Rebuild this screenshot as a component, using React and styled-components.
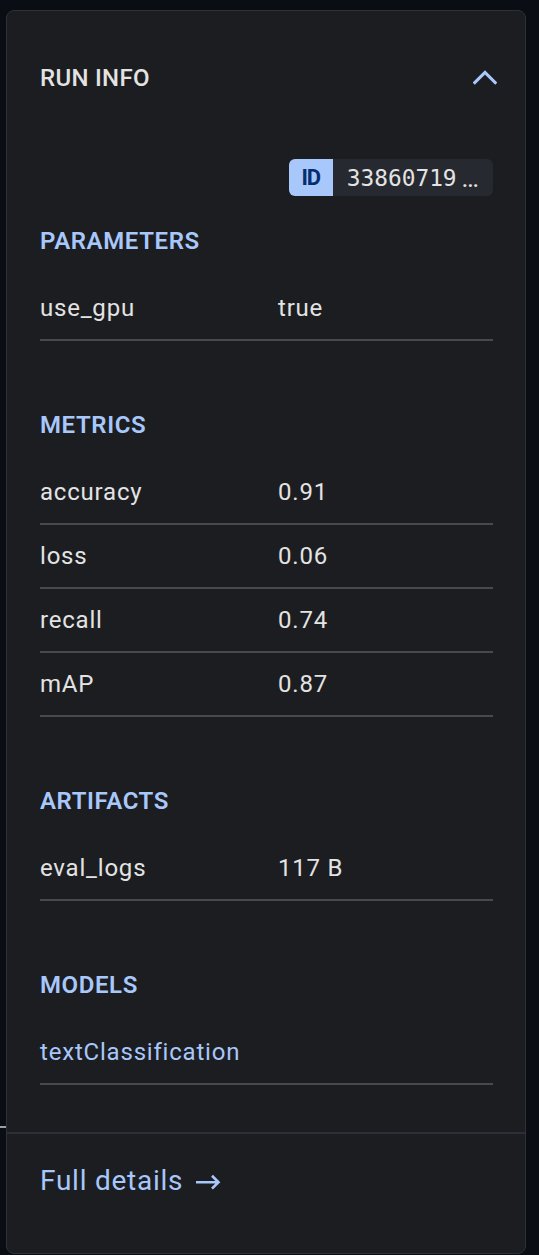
import React from "react"
import styled, { createGlobalStyle } from "styled-components"

const GlobalStyle = createGlobalStyle`
  html, body {
    margin: 0;
    padding: 0;
    background: #0a0d14;
    font-family: Roboto, "Noto Sans", "Liberation Sans", sans-serif;
    -webkit-font-smoothing: antialiased;
  }
`

const runInfo = {
  id: "33860719",
  parameters: [{ name: "use_gpu", value: "true" }],
  metrics: [
    { name: "accuracy", value: "0.91" },
    { name: "loss", value: "0.06" },
    { name: "recall", value: "0.74" },
    { name: "mAP", value: "0.87" },
  ],
  artifacts: [{ name: "eval_logs", value: "117 B" }],
  models: [{ name: "textClassification", link: true }],
}

export default function App() {
  return (
    <>
      <GlobalStyle />
      <Page>
        <Stray />
        <Card>
          <Body>
            <Header>
              <Title>Run info</Title>
              <Toggle aria-label="collapse">
                <svg width="24" height="16" viewBox="0 0 24 16" fill="none">
                  <polyline
                    points="1.8,13.6 12,3.4 22.2,13.6"
                    stroke="#a8c7fa"
                    strokeWidth="3.2"
                    strokeLinecap="square"
                    strokeLinejoin="miter"
                  />
                </svg>
              </Toggle>
            </Header>

            <IdRow>
              <IdBadge>
                <IdTag>ID</IdTag>
                <IdValue>
                  {runInfo.id}
                  <Dots>…</Dots>
                </IdValue>
              </IdBadge>
            </IdRow>

            <InfoSection title="Parameters" rows={runInfo.parameters} first />
            <InfoSection title="Metrics" rows={runInfo.metrics} />
            <InfoSection title="Artifacts" rows={runInfo.artifacts} />
            <InfoSection title="Models" rows={runInfo.models} />
          </Body>

          <Footer>
            <DetailsLink href="#">
              Full details
              <svg width="26" height="16" viewBox="0 0 26 16" fill="none">
                <path
                  d="M1 8.2H23.5M17 1.8L23.5 8.2L17 14.6"
                  stroke="#a8c7fa"
                  strokeWidth="2.6"
                  strokeLinecap="butt"
                  strokeLinejoin="miter"
                />
              </svg>
            </DetailsLink>
          </Footer>
        </Card>
      </Page>
    </>
  )
}

function InfoSection({ title, rows, first }) {
  return (
    <Section $first={first}>
      <SectionTitle>{title}</SectionTitle>
      {rows.map(row => (
        <Row key={row.name}>
          {row.link ? <ModelLink>{row.name}</ModelLink> : <Label>{row.name}</Label>}
          {row.value && <Value>{row.value}</Value>}
        </Row>
      ))}
    </Section>
  )
}

const Page = styled.div`
  position: relative;
  min-height: 1255px;
  padding: 10px 0 0 6px;
  box-sizing: border-box;
`

// bit of the canvas poking out from behind the card
const Stray = styled.div`
  position: absolute;
  left: 0;
  top: 1126px;
  width: 6px;
  height: 2px;
  background: #9a9ea6;
`

const Card = styled.div`
  position: relative;
  width: 520px;
  height: 1244px;
  box-sizing: border-box;
  background: #1c1d20;
  border: 1px solid #2d3138;
  border-radius: 8px;
  display: flex;
  flex-direction: column;
  overflow: hidden;
`

const Body = styled.div`
  padding: 51px 32px 47px 33px;
`

const Header = styled.div`
  display: flex;
  align-items: center;
  justify-content: space-between;
  height: 32px;
`

const Title = styled.h2`
  margin: 0;
  font-size: 24px;
  line-height: 32px;
  font-weight: 500;
  text-transform: uppercase;
  color: #e3e3e3;
  letter-spacing: 0.3px;
`

const Toggle = styled.button`
  display: flex;
  align-items: center;
  padding: 0;
  margin: -2px -4px 0 0;
  border: 0;
  background: none;
  cursor: pointer;
`

const IdRow = styled.div`
  display: flex;
  justify-content: flex-end;
  margin-top: 65px;
`

const IdBadge = styled.div`
  display: flex;
  height: 37px;
  border-radius: 6px;
  overflow: hidden;
  background: #26292f;
`

const IdTag = styled.span`
  display: flex;
  align-items: center;
  justify-content: center;
  width: 44px;
  background: #a8c7fa;
  color: #062e6f;
  font-size: 22px;
  font-weight: 700;
  letter-spacing: -1px;
`

const IdValue = styled.span`
  display: flex;
  align-items: center;
  padding: 0 14px;
  font-family: "DejaVu Sans Mono", "Liberation Mono", monospace;
  font-size: 22.8px;
  color: #e3e3e3;
`

const Dots = styled.span`
  margin-left: 5px;
  font-family: Roboto, sans-serif;
  font-size: 26px;
`

const Section = styled.section`
  margin-top: ${({ $first }) => ($first ? "29px" : "68px")};
`

const SectionTitle = styled.h3`
  margin: 0 0 20px;
  font-size: 24px;
  line-height: 32px;
  font-weight: 600;
  text-transform: uppercase;
  letter-spacing: 0.6px;
  color: #a8c7fa;
`

const Row = styled.div`
  display: grid;
  grid-template-columns: 238px 1fr;
  align-items: center;
  height: 62px;
  border-bottom: 2px solid #47494e;
`

const Label = styled.span`
  font-size: 24px;
  letter-spacing: 0.8px;
  color: #e3e3e3;
`

const Value = styled(Label)``

const ModelLink = styled(Label)`
  color: #a8c7fa;
`

const Footer = styled.div`
  border-top: 2px solid #2b3038;
  padding: 31px 33px;
`

const DetailsLink = styled.a`
  display: inline-flex;
  align-items: center;
  gap: 12px;
  font-size: 28px;
  line-height: 32px;
  letter-spacing: 0.75px;
  color: #a8c7fa;
  text-decoration: none;

  svg {
    margin-top: 1px;
  }
`
